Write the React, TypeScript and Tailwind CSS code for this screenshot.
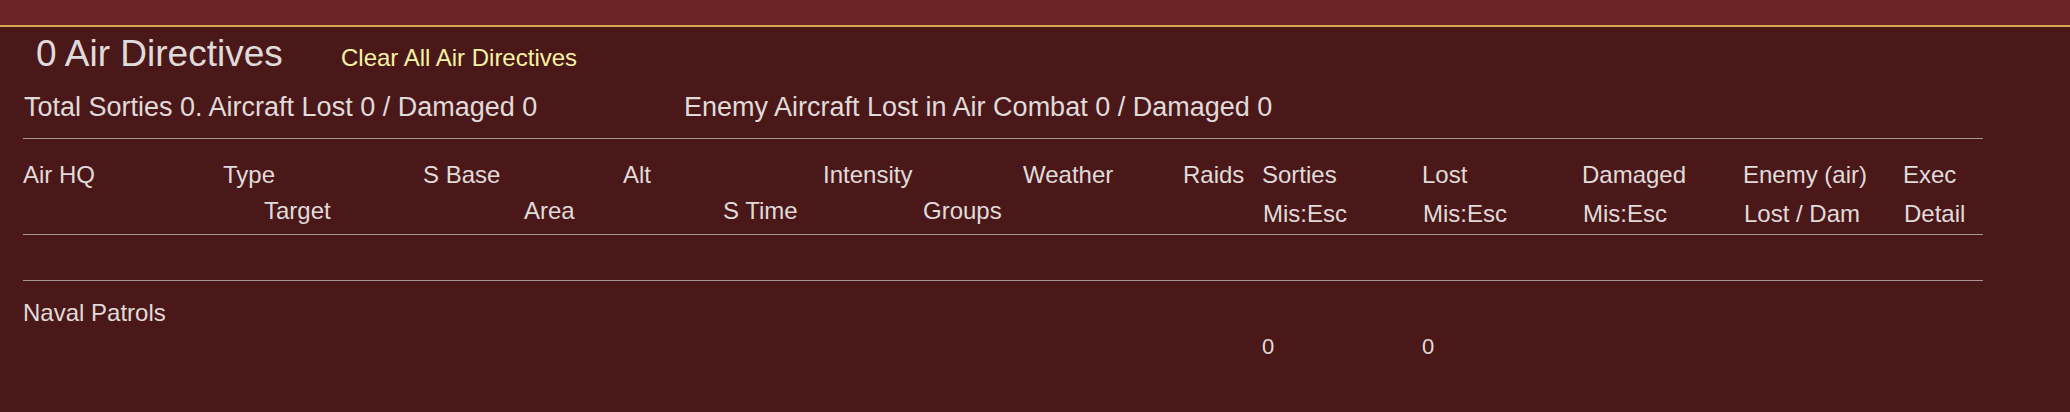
import React from 'react';

// Column templates measured from the reference (container starts at x=23)
const mainCols =
  'grid grid-cols-[200px_200px_200px_200px_200px_160px_79px_160px_160px_161px_160px_1fr]';
const subCols = 'grid grid-cols-[241px_260px_199px_200px_340px_160px_160px_161px_160px_1fr]';

const headerTop = ['Air HQ', 'Type', 'S Base', 'Alt', 'Intensity', 'Weather', 'Raids', 'Sorties', 'Lost', 'Damaged', 'Enemy (air)', 'Exec'];

export default function App() {
  return (
    <div className="h-[412px] w-[2070px] overflow-hidden bg-[#4a1818] font-['Liberation_Sans',Arial,sans-serif] text-[#e0dbdb]">
      {/* Top band */}
      <div className="h-[27px] bg-[#6b2525] border-b-2 border-[#d6a84c]" />

      {/* Title row */}
      <div className="mt-[7px] flex items-baseline pl-[36px]">
        <div className="w-[305px] text-[37px] leading-[40px]">0 Air Directives</div>
        <button className="text-[24px] leading-[28px] text-[#f6f2a4]">Clear All Air Directives</button>
      </div>

      {/* Totals */}
      <div className="mt-[17px] flex pl-[24px] text-[27px] leading-[32px]">
        <div className="w-[660px]">Total Sorties 0. Aircraft Lost 0 / Damaged 0</div>
        <div>Enemy Aircraft Lost in Air Combat 0 / Damaged 0</div>
      </div>

      {/* Table */}
      <div className="ml-[23px] mt-[15px] w-[1960px] text-[24px] leading-[28px]">
        <div className="border-t border-[#a99595]" />
        <div className="h-[95px] pt-[22px]">
          <div className={mainCols}>
            {headerTop.map((h) => (
              <div key={h} className="whitespace-nowrap">{h}</div>
            ))}
          </div>
          <div className={`${subCols} mt-[8px]`}>
            <div />
            <div>Target</div>
            <div>Area</div>
            <div>S Time</div>
            <div>Groups</div>
            <div className="mt-[3px]">Mis:Esc</div>
            <div className="mt-[3px]">Mis:Esc</div>
            <div className="mt-[3px]">Mis:Esc</div>
            <div className="mt-[3px] whitespace-nowrap">Lost / Dam</div>
            <div className="mt-[3px]">Detail</div>
          </div>
        </div>
        <div className="border-t border-[#a99595]" />
        <div className="h-[45px]" />
        <div className="border-t border-[#a99595]" />

        {/* Naval Patrols row */}
        <div className="pt-[18px]">
          <div>Naval Patrols</div>
          <div className={`${mainCols} mt-[7px] text-[22px] leading-[26px]`}>
            <div />
            <div />
            <div />
            <div />
            <div />
            <div />
            <div />
            <div>0</div>
            <div>0</div>
          </div>
        </div>
      </div>
    </div>
  );
}
